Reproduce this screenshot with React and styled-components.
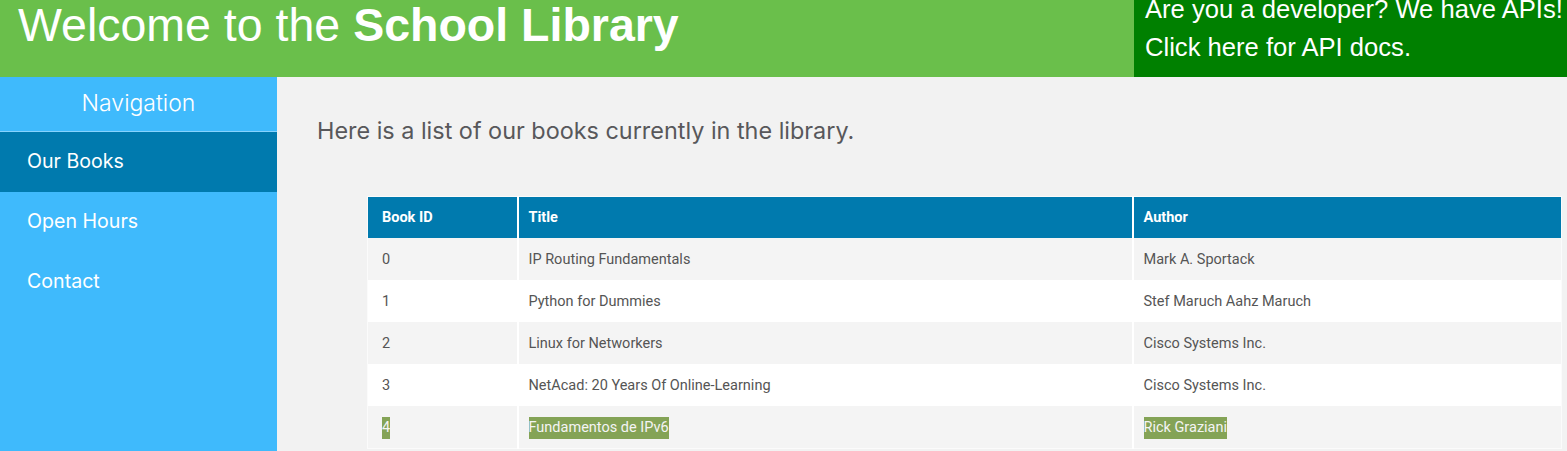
import React from 'react';
import styled, { createGlobalStyle } from 'styled-components';

const GlobalStyle = createGlobalStyle`
  html, body {
    margin: 0;
    padding: 0;
    background: #f2f2f2;
    overflow: hidden;
  }
`;

const Page = styled.div`
  width: 1567px;
  height: 451px;
  display: flex;
  flex-direction: column;
  overflow: hidden;
`;

const Header = styled.header`
  flex: 0 0 77px;
  display: flex;
  background: #6abf4b;
`;

const Title = styled.h1`
  flex: 1;
  margin: 0;
  padding: 0 0 0 18px;
  font-family: "Liberation Sans", Arial, sans-serif;
  font-weight: normal;
  font-size: 46.5px;
  line-height: 50px;
  color: #fff;

  strong {
    font-weight: bold;
  }
`;

const ApiBox = styled.a`
  box-sizing: border-box;
  flex: 0 0 433px;
  background: #008000;
  color: #fff;
  text-decoration: none;
  overflow: hidden;
  white-space: nowrap;
  font-family: "Liberation Sans", Arial, sans-serif;
  font-size: 25.6px;
  line-height: 38px;
  padding-left: 11px;
`;

const ApiLine = styled.p`
  margin: ${(p) => (p.$first ? '-10px 0 0' : '0')};
`;

const Body = styled.div`
  flex: 1;
  display: flex;
  min-height: 0;
`;

const Sidebar = styled.nav`
  flex: 0 0 277px;
  background: #3fbafc;
  font-family: Inter, Roboto, sans-serif;
  color: #fff;
`;

const NavTitle = styled.div`
  height: 54px;
  border-bottom: 1px solid #86d3fd;
  text-align: center;
  font-size: 23px;
  font-weight: 300;
  line-height: 52px;
`;

const NavItem = styled.a`
  display: block;
  height: 60px;
  line-height: 58px;
  padding-left: 27px;
  font-size: 19.6px;
  color: #fff;
  text-decoration: none;
  background: ${(p) => (p.$active ? '#007aae' : 'transparent')};
`;

const Main = styled.main`
  flex: 1;
  padding: 0 0 0 40px;
  background: #f2f2f2;
`;

const Intro = styled.p`
  margin: 40px 0 0;
  font-family: Inter, Roboto, sans-serif;
  font-size: 23.4px;
  line-height: 28px;
  color: #58585b;
`;

const Table = styled.table`
  margin: 51px 0 0 50px;
  width: 1195px;
  border-collapse: collapse;
  border: 1px solid #fbfbfb;
  font-family: Roboto, "Noto Sans", sans-serif;
  font-size: 14.5px;
  table-layout: fixed;
`;

const Th = styled.th`
  height: 41px;
  padding: 0 10px;
  text-align: left;
  background: #007aae;
  color: #fff;
  font-weight: bold;
  border-right: 2px solid #fff;

  &:first-child {
    padding-left: 14px;
  }

  &:last-child {
    border-right: none;
  }
`;

const Row = styled.tr`
  background: ${(p) => (p.$odd ? '#ffffff' : '#f4f4f4')};
`;

const Td = styled.td`
  height: 42px;
  padding: 0 10px;
  color: #555;
  border-right: 2px solid #fff;

  &:first-child {
    padding-left: 14px;
  }

  &:last-child {
    border-right: none;
  }
`;

const Selected = styled.span`
  background: #84a356;
  color: #f4f4f4;
  padding: 2px 0 3px;
`;

const books = [
  { id: 0, title: 'IP Routing Fundamentals', author: 'Mark A. Sportack' },
  { id: 1, title: 'Python for Dummies', author: 'Stef Maruch Aahz Maruch' },
  { id: 2, title: 'Linux for Networkers', author: 'Cisco Systems Inc.' },
  { id: 3, title: 'NetAcad: 20 Years Of Online-Learning', author: 'Cisco Systems Inc.' },
  { id: 4, title: 'Fundamentos de IPv6', author: 'Rick Graziani', selected: true },
];

const Cell = ({ selected, children }) => (
  <Td>{selected ? <Selected>{children}</Selected> : children}</Td>
);

export default function App() {
  return (
    <Page>
      <GlobalStyle />
      <Header>
        <Title>
          Welcome to the <strong>School Library</strong>
        </Title>
        <ApiBox href="#">
          <ApiLine $first>Are you a developer? We have APIs!</ApiLine>
          <ApiLine>Click here for API docs.</ApiLine>
        </ApiBox>
      </Header>
      <Body>
        <Sidebar>
          <NavTitle>Navigation</NavTitle>
          <NavItem href="#" $active>Our Books</NavItem>
          <NavItem href="#">Open Hours</NavItem>
          <NavItem href="#">Contact</NavItem>
        </Sidebar>
        <Main>
          <Intro>Here is a list of our books currently in the library.</Intro>
          <Table>
            <colgroup>
              <col style={{ width: 150 }} />
              <col style={{ width: 615 }} />
              <col />
            </colgroup>
            <thead>
              <tr>
                <Th>Book ID</Th>
                <Th>Title</Th>
                <Th>Author</Th>
              </tr>
            </thead>
            <tbody>
              {books.map((b, i) => (
                <Row key={b.id} $odd={i % 2 === 1}>
                  <Cell selected={b.selected}>{b.id}</Cell>
                  <Cell selected={b.selected}>{b.title}</Cell>
                  <Cell selected={b.selected}>{b.author}</Cell>
                </Row>
              ))}
            </tbody>
          </Table>
        </Main>
      </Body>
    </Page>
  );
}
